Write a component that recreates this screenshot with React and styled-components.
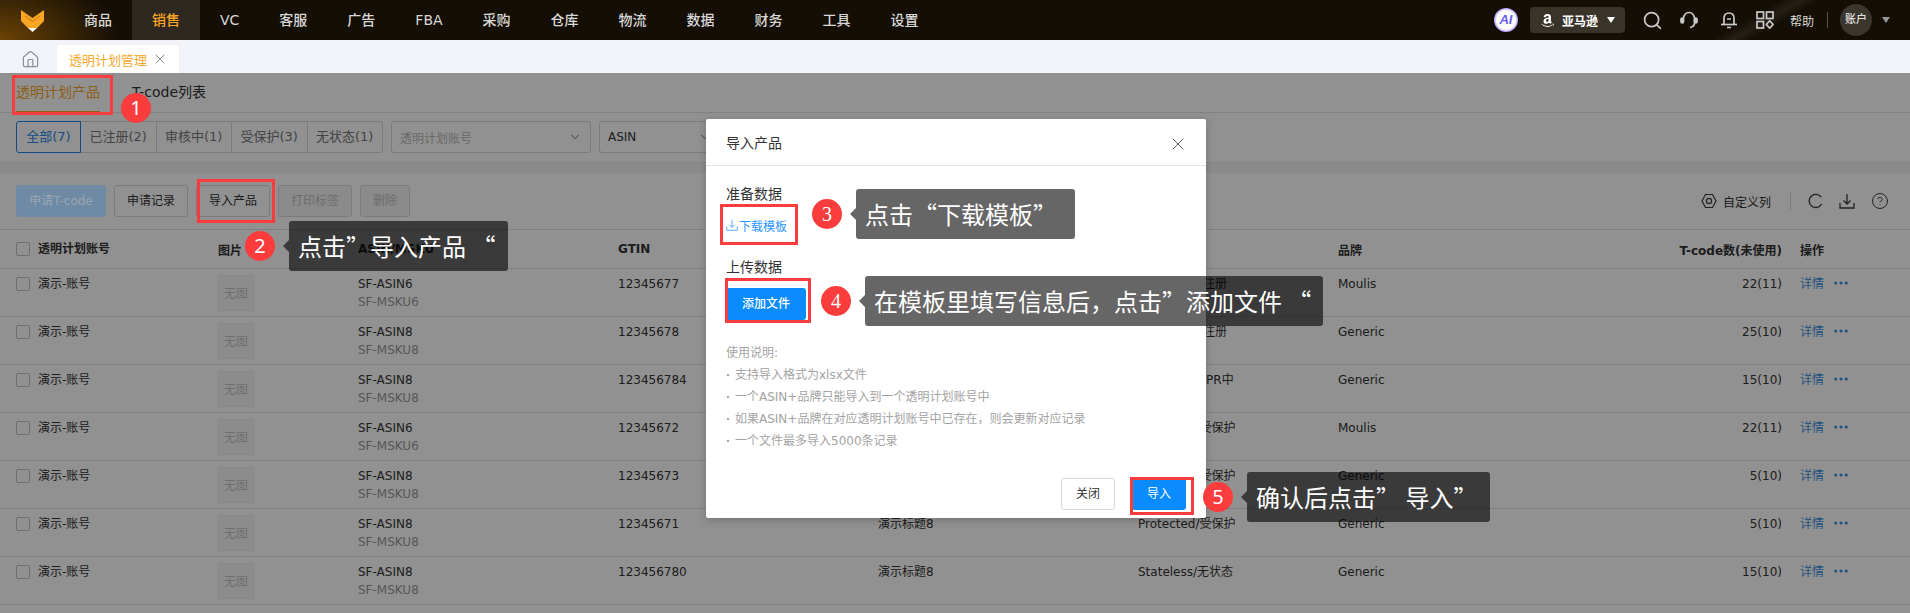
import React from "react";
import styled, { createGlobalStyle } from "styled-components";
import { FaAmazon } from "react-icons/fa";
import { ChevronDown, CircleHelp, Ellipsis, Home, Search, X } from "lucide-react";

const navItems = ["商品", "销售", "VC", "客服", "广告", "FBA", "采购", "仓库", "物流", "数据", "财务", "工具", "设置"];
const filters = ["全部(7)", "已注册(2)", "审核中(1)", "受保护(3)", "无状态(1)"];
const tips = ["支持导入格式为xlsx文件", "一个ASIN+品牌只能导入到一个透明计划账号中", "如果ASIN+品牌在对应透明计划账号中已存在，则会更新对应记录", "一个文件最多导入5000条记录"];
const rows = [
  ["6", "12345677", "Enrolled/已注册", "Moulis", "22(11)"],
  ["8", "12345678", "Enrolled/已注册", "Generic", "25(10)"],
  ["8", "123456784", "Processing/PR中", "Generic", "15(10)"],
  ["6", "12345672", "Protected/受保护", "Moulis", "22(11)"],
  ["8", "12345673", "Protected/受保护", "Generic", "5(10)"],
  ["8", "12345671", "Protected/受保护", "Generic", "5(10)"],
  ["8", "123456780", "Stateless/无状态", "Generic", "15(10)"],
];

const Logo = () => (
  <svg width="23" height="22" viewBox="0 0 23 22">
    <path d="M0 0L11.5 8L23 0V11L16 18H7L0 11Z" fill="#fba525" />
    <path d="M4 6L11.5 11.5L19 6" fill="none" stroke="#c47a12" strokeWidth="1" />
    <path d="M7 18H16L11.5 22Z" fill="#fff" />
  </svg>
);
const Headset = () => (
  <svg width="18" height="18" viewBox="0 0 18 18" fill="none" stroke="#c9c9c9" strokeWidth="1.7">
    <path d="M3.5 7.5C4 3.5 6.5 1.5 9 1.5S14 3.5 14.5 7.5" />
    <path d="M14.5 8V12C14.5 14.5 12.5 16 10 16.5" />
    <rect x="1" y="7" width="2.5" height="5" rx="1.2" fill="#c9c9c9" />
    <rect x="14.5" y="7" width="2.5" height="5" rx="1.2" fill="#c9c9c9" />
  </svg>
);
const Bell = () => (
  <svg width="18" height="18" viewBox="0 0 18 18" fill="none" stroke="#c9c9c9" strokeWidth="1.7">
    <path d="M4 13V7.5C4 4 6 2 9 2S14 4 14 7.5V13" />
    <path d="M1 13.5H17" />
    <path d="M7 16.5H11M7 8H11" />
  </svg>
);
const Apps = () => (
  <svg width="18" height="18" viewBox="0 0 18 18" fill="none" stroke="#c9c9c9" strokeWidth="1.7">
    <rect x="1" y="1" width="6.5" height="6.5" />
    <rect x="10.5" y="1" width="6.5" height="6.5" />
    <rect x="1" y="10.5" width="6.5" height="6.5" />
    <path d="M13.7 9.8L17 13.5L13.7 17.2L10.4 13.5Z" />
  </svg>
);
const HexGear = () => (
  <svg width="16" height="16" viewBox="0 0 16 16" fill="none" stroke="#3d3d3d" strokeWidth="1.2">
    <path d="M4.5 1.5H11.5L15 8L11.5 14.5H4.5L1 8Z" />
    <circle cx="8" cy="8" r="2.6" />
  </svg>
);
const Reload = () => (
  <svg width="15" height="16" viewBox="0 0 15 16" fill="none" stroke="#3d3d3d" strokeWidth="1.4">
    <path d="M13.2 4.2A6.6 6.6 0 1 0 13.6 11" />
  </svg>
);
const Download = ({ size = 16, color = "#3d3d3d", width = 1.3 }) => (
  <svg width={size} height={size} viewBox="0 0 16 16" fill="none" stroke={color} strokeWidth={width}>
    <path d="M8 1V11M4.5 7.5L8 11L11.5 7.5" />
    <path d="M1 10V15H15V10" />
  </svg>
);

export default function App() {
  return (
    <Page>
      <Global />
      <Nav>
        <LogoBox><Logo /></LogoBox>
        {navItems.map((item, i) => (
          <NavItem key={item} $active={i === 1}>{item}</NavItem>
        ))}
        <NavRight>
          <AiBadge>AI</AiBadge>
          <StorePill>
            <FaAmazon size={15} color="#fff" />
            <span>亚马逊</span>
            <Caret $color="#fff" />
          </StorePill>
          <NavIcon $ml={17}><Search size={21} color="#c9c9c9" strokeWidth={1.9} /></NavIcon>
          <NavIcon $ml={17}><Headset /></NavIcon>
          <NavIcon $ml={22}><Bell /></NavIcon>
          <NavIcon $ml={18}><Apps /></NavIcon>
          <HelpText>帮助</HelpText>
          <NavDivider />
          <Avatar>账户</Avatar>
          <Caret $color="#999" />
        </NavRight>
      </Nav>

      <TabBar>
        <HomeBox><Home size={19} color="#8b8f96" strokeWidth={1.5} /></HomeBox>
        <PageTab>
          透明计划管理
          <X size={16} color="#888" strokeWidth={1.5} />
        </PageTab>
      </TabBar>

      <Content>
        <SubTabs>
          <SubTab $active>透明计划产品</SubTab>
          <SubTab>T-code列表</SubTab>
        </SubTabs>

        <FilterRow>
          <Segments>
            {filters.map((f, i) => (
              <Segment key={f} $active={i === 0}>{f}</Segment>
            ))}
          </Segments>
          <Select $width={200} $muted>
            透明计划账号
            <ChevronDown size={14} color="#aaa" />
          </Select>
          <Select $width={122}>
            ASIN
            <ChevronDown size={14} color="#aaa" />
          </Select>
        </FilterRow>

        <Strip />

        <Toolbar>
          <PrimaryDisabled>申请T-code</PrimaryDisabled>
          <ToolButton>申请记录</ToolButton>
          <ToolButton>导入产品</ToolButton>
          <ToolButton $disabled>打印标签</ToolButton>
          <ToolButton $disabled $narrow>删除</ToolButton>
          <ToolRight>
            <ColumnSetting><HexGear />自定义列</ColumnSetting>
            <ToolDivider />
            <ToolIcon><Reload /></ToolIcon>
            <ToolIcon><Download /></ToolIcon>
            <ToolIcon><CircleHelp size={18} color="#3d3d3d" strokeWidth={1.3} /></ToolIcon>
          </ToolRight>
        </Toolbar>

        <HeadRow>
          <AccountCell><Check />透明计划账号</AccountCell>
          <div>图片</div>
          <div>ASIN/MSKU</div>
          <div>GTIN</div>
          <div>标题</div>
          <div>状态</div>
          <div>品牌</div>
          <RightCell>T-code数(未使用)</RightCell>
          <ActionHead>操作</ActionHead>
        </HeadRow>
        {rows.map((r, i) => (
          <Row key={i}>
            <AccountCell><Check />演示-账号</AccountCell>
            <Thumb>无图</Thumb>
            <div>
              SF-ASIN{r[0]}
              <Sku>SF-MSKU{r[0]}</Sku>
            </div>
            <div>{r[1]}</div>
            <div>演示标题8</div>
            <div>{r[2]}</div>
            <div>{r[3]}</div>
            <RightCell>{r[4]}</RightCell>
            <Actions>
              <span>详情</span>
              <Ellipsis size={18} strokeWidth={2.2} />
            </Actions>
          </Row>
        ))}
        <Mask />
      </Content>

      <Modal>
        <ModalHead>
          导入产品
          <X size={20} color="#555" strokeWidth={1.2} />
        </ModalHead>
        <ModalBody>
          <FieldLabel>准备数据</FieldLabel>
          <TemplateLink><Download size={12} color="#4da3ff" width={1.2} />下载模板</TemplateLink>
          <FieldLabel $top={22}>上传数据</FieldLabel>
          <AddFile>添加文件</AddFile>
          <Usage>
            <div>使用说明:</div>
            {tips.map((t) => (
              <Tip key={t}>{t}</Tip>
            ))}
          </Usage>
        </ModalBody>
        <ModalFoot>
          <CloseButton>关闭</CloseButton>
          <ImportButton>导入</ImportButton>
        </ModalFoot>
      </Modal>

      <RedBox $x={12} $y={75} $w={101} $h={40} />
      <RedBox $x={197} $y={179} $w={78} $h={44} />
      <RedBox $x={720} $y={204} $w={78} $h={41} />
      <RedBox $x={725} $y={278} $w={86} $h={45} />
      <RedBox $x={1130} $y={477} $w={64} $h={38} />

      <Badge $x={121} $y={93}>1</Badge>
      <Badge $x={245} $y={231}>2</Badge>
      <Badge $x={812} $y={199} $serif>3</Badge>
      <Badge $x={821} $y={286} $serif>4</Badge>
      <Badge $x={1203} $y={482}>5</Badge>

      <Callout $x={289} $y={221} $w={219}>点击”导入产品 “</Callout>
      <Callout $x={856} $y={189} $w={219}>点击“下载模板”</Callout>
      <Callout $x={865} $y={276} $w={458}>在模板里填写信息后，点击”添加文件 “</Callout>
      <Callout $x={1247} $y={472} $w={243}>确认后点击” 导入”</Callout>
    </Page>
  );
}

const Global = createGlobalStyle`
  html, body {
    margin: 0;
    padding: 0;
    background: #fff;
  }
  body {
    font-family: "DejaVu Sans", "Noto Sans CJK SC", sans-serif;
    font-size: 12px;
    color: #333;
  }
`;

const Page = styled.div`
  position: relative;
  width: 1910px;
  height: 613px;
  overflow: hidden;
`;

const Nav = styled.div`
  display: flex;
  align-items: center;
  height: 40px;
  color: #d8d8d8;
  background:
    radial-gradient(ellipse 120px 70px at 0 100%, #6b4305 0%, rgba(107, 67, 5, 0) 100%),
    linear-gradient(150deg, rgba(0, 0, 0, 0) 90%, rgba(70, 62, 50, 0.35) 91%, rgba(0, 0, 0, 0) 92%),
    #140e05;
`;

const LogoBox = styled.div`
  display: flex;
  align-items: center;
  width: 64px;
  padding: 2px 0 0 21px;
  box-sizing: border-box;
`;

const NavItem = styled.div`
  padding: 0 20px;
  height: 40px;
  line-height: 40px;
  font-size: 14px;
  font-weight: 500;
  color: ${(p) => (p.$active ? "#fba525" : "#d8d8d8")};
  background: ${(p) => (p.$active ? "#2e2820" : "transparent")};
`;

const NavRight = styled.div`
  display: flex;
  align-items: center;
  margin-left: auto;
  padding-right: 20px;
`;

const AiBadge = styled.div`
  width: 24px;
  height: 24px;
  border-radius: 50%;
  margin-right: 12px;
  text-align: center;
  line-height: 24px;
  font-family: "Liberation Sans", sans-serif;
  font-size: 13px;
  font-weight: 700;
  font-style: italic;
  color: #6a5cf0;
  background: radial-gradient(circle at 50% 50%, #fff 55%, #a98bff 72%, #3fb4f5 100%);
`;

const StorePill = styled.div`
  display: flex;
  align-items: center;
  width: 95px;
  height: 26px;
  padding-left: 10px;
  box-sizing: border-box;
  border-radius: 4px;
  background: #3a3329;
  color: #fff;
  font-weight: 700;
  span {
    margin: 0 9px 0 7px;
  }
`;

const Caret = styled.i`
  width: 0;
  height: 0;
  border-left: 4px solid transparent;
  border-right: 4px solid transparent;
  border-top: 6px solid ${(p) => p.$color};
`;

const NavIcon = styled.div`
  display: flex;
  margin-left: ${(p) => p.$ml}px;
`;

const HelpText = styled.div`
  margin-left: 16px;
  color: #d8d8d8;
`;

const NavDivider = styled.div`
  width: 1px;
  height: 16px;
  margin: 0 12px 0 13px;
  background: #555;
`;

const Avatar = styled.div`
  width: 32px;
  height: 32px;
  margin-right: 10px;
  border-radius: 50%;
  line-height: 32px;
  text-align: center;
  font-size: 11px;
  color: #fff;
  background: #3a352d;
`;

const TabBar = styled.div`
  display: flex;
  align-items: flex-end;
  height: 33px;
  background: #f1f3f8;
`;

const HomeBox = styled.div`
  display: flex;
  justify-content: center;
  align-items: center;
  width: 57px;
  height: 28px;
  padding-left: 3px;
  box-sizing: border-box;
`;

const PageTab = styled.div`
  display: flex;
  align-items: center;
  justify-content: space-between;
  width: 122px;
  height: 28px;
  padding: 0 11px 0 12px;
  box-sizing: border-box;
  border-radius: 3px 3px 0 0;
  font-size: 13px;
  white-space: nowrap;
  background: #fff;
  color: #f7a72c;
`;

const Content = styled.div`
  position: relative;
  height: 540px;
  overflow: hidden;
  background: #fff;
`;

const Mask = styled.div`
  position: absolute;
  inset: 0;
  z-index: 1;
  background: rgba(0, 0, 0, 0.43);
`;

const SubTabs = styled.div`
  display: flex;
  gap: 32px;
  height: 39px;
  padding-left: 16px;
  border-bottom: 1px solid #e3e5ea;
`;

const SubTab = styled.div`
  height: 39px;
  line-height: 38px;
  box-sizing: border-box;
  font-size: 14px;
  color: ${(p) => (p.$active ? "#f7a72c" : "#333")};
  border-bottom: 1px solid ${(p) => (p.$active ? "#f7a72c" : "transparent")};
`;

const FilterRow = styled.div`
  display: flex;
  gap: 8px;
  padding: 8px 16px;
`;

const Segments = styled.div`
  display: flex;
`;

const Segment = styled.div`
  width: ${(p) => (p.$active ? 65 : 76.5)}px;
  height: 32px;
  line-height: 30px;
  box-sizing: border-box;
  text-align: center;
  font-size: 13px;
  margin-left: -1px;
  position: relative;
  color: ${(p) => (p.$active ? "#2a87e8" : "#777")};
  border: 1px solid ${(p) => (p.$active ? "#1a86f0" : "#d9d9d9")};
  z-index: ${(p) => (p.$active ? 1 : 0)};
  &:first-child {
    margin-left: 0;
    border-radius: 3px 0 0 3px;
  }
  &:last-child {
    border-radius: 0 3px 3px 0;
  }
`;

const Select = styled.div`
  display: flex;
  align-items: center;
  justify-content: space-between;
  width: ${(p) => p.$width}px;
  height: 32px;
  padding: 0 8px;
  box-sizing: border-box;
  border: 1px solid #d9d9d9;
  border-radius: 3px;
  color: ${(p) => (p.$muted ? "#bbb" : "#333")};
`;

const Strip = styled.div`
  height: 12px;
  background: #f1f2f4;
`;

const Toolbar = styled.div`
  display: flex;
  align-items: center;
  gap: 8px;
  height: 57px;
  padding: 0 16px;
  box-sizing: border-box;
  border-bottom: 1px solid #dfe1e6;
`;

const PrimaryDisabled = styled.div`
  position: relative;
  z-index: 2;
  width: 90px;
  height: 32px;
  line-height: 32px;
  text-align: center;
  border-radius: 3px;
  background: #6f8aa5;
  color: #98a6b4;
`;

const ToolButton = styled.div`
  width: ${(p) => (p.$narrow ? 50 : 74)}px;
  height: 32px;
  line-height: 30px;
  box-sizing: border-box;
  text-align: center;
  border-radius: 3px;
  border: 1px solid #d9d9d9;
  color: ${(p) => (p.$disabled ? "#c0c0c0" : "#333")};
  background: ${(p) => (p.$disabled ? "#f5f5f5" : "#fff")};
`;

const ToolRight = styled.div`
  display: flex;
  align-items: center;
  margin-left: auto;
  padding-right: 5px;
`;

const ColumnSetting = styled.div`
  display: flex;
  align-items: center;
  gap: 6px;
`;

const ToolDivider = styled.div`
  width: 1px;
  height: 18px;
  margin: 0 17px 0 19px;
  background: #d9d9d9;
`;

const ToolIcon = styled.div`
  display: flex;
  margin-right: 16px;
  &:last-child {
    margin-right: 0;
  }
`;

const columns = "202px 140px 260px 260px 260px 200px 200px 244px 128px";

const HeadRow = styled.div`
  display: grid;
  grid-template-columns: ${columns};
  height: 39px;
  align-items: center;
  padding-left: 16px;
  box-sizing: border-box;
  border-bottom: 1px solid #dfe1e6;
  font-weight: 700;
`;

const ActionHead = styled.div`
  padding-left: 18px;
`;

const Row = styled.div`
  display: grid;
  grid-template-columns: ${columns};
  align-items: start;
  height: 48px;
  padding: 6px 0 0 16px;
  box-sizing: border-box;
  line-height: 18px;
  border-bottom: 1px solid #dfe1e6;
`;

const AccountCell = styled.div`
  display: flex;
  align-items: center;
  gap: 8px;
  line-height: 18px;
`;

const Check = styled.i`
  flex: none;
  width: 14px;
  height: 14px;
  box-sizing: border-box;
  border: 1.5px solid #c4c4c4;
  border-radius: 2px;
  background: #fff;
`;

const Thumb = styled.div`
  width: 36px;
  height: 36px;
  line-height: 36px;
  box-sizing: border-box;
  text-align: center;
  color: #c4c4c4;
  background: #f7f7f7;
  border: 1px solid #f0f0f0;
`;

const Sku = styled.div`
  color: #999;
`;

const RightCell = styled.div`
  text-align: right;
  white-space: nowrap;
`;

const Actions = styled.div`
  display: flex;
  align-items: flex-start;
  gap: 8px;
  padding-left: 18px;
  color: #3a8ee6;
  svg {
    margin-top: -1px;
  }
`;

const Modal = styled.div`
  position: absolute;
  left: 706px;
  top: 119px;
  z-index: 3;
  display: flex;
  flex-direction: column;
  width: 500px;
  height: 399px;
  border-radius: 2px;
  background: #fff;
  box-shadow: 0 2px 8px rgba(0, 0, 0, 0.2);
`;

const ModalHead = styled.div`
  display: flex;
  align-items: center;
  justify-content: space-between;
  height: 47px;
  padding: 0 18px 0 20px;
  box-sizing: border-box;
  border-bottom: 1px solid #e2e2e2;
  font-size: 14px;
  color: #333;
  svg {
    margin-top: 3px;
  }
`;

const ModalBody = styled.div`
  padding: 18px 20px 0;
`;

const FieldLabel = styled.div`
  margin-top: ${(p) => p.$top || 0}px;
  line-height: 20px;
  font-size: 14px;
  color: #333;
`;

const TemplateLink = styled.div`
  display: flex;
  align-items: center;
  gap: 1px;
  height: 20px;
  margin-top: 11px;
  color: #2d96ff;
`;

const AddFile = styled.div`
  width: 80px;
  height: 32px;
  margin-top: 11px;
  line-height: 32px;
  text-align: center;
  border-radius: 3px;
  font-weight: 500;
  color: #fff;
  background: #0a8cff;
`;

const Usage = styled.div`
  margin-top: 22px;
  line-height: 22px;
  color: #a3a3a3;
`;

const Tip = styled.div`
  position: relative;
  padding-left: 9px;
  &::before {
    content: "";
    position: absolute;
    left: 1px;
    top: 10px;
    width: 2px;
    height: 2px;
    background: #a3a3a3;
  }
`;

const ModalFoot = styled.div`
  display: flex;
  justify-content: flex-end;
  gap: 17px;
  margin-top: auto;
  padding: 0 20px 8px;
`;

const CloseButton = styled.div`
  width: 54px;
  height: 32px;
  line-height: 30px;
  box-sizing: border-box;
  text-align: center;
  border: 1px solid #d9d9d9;
  border-radius: 3px;
  color: #333;
`;

const ImportButton = styled.div`
  width: 54px;
  height: 32px;
  line-height: 32px;
  text-align: center;
  border-radius: 3px;
  color: #fff;
  background: #0a8cff;
`;

const RedBox = styled.div`
  position: absolute;
  left: ${(p) => p.$x}px;
  top: ${(p) => p.$y}px;
  z-index: 4;
  width: ${(p) => p.$w}px;
  height: ${(p) => p.$h}px;
  box-sizing: border-box;
  border: 3px solid #fb3c3c;
`;

const Badge = styled.div`
  position: absolute;
  left: ${(p) => p.$x}px;
  top: ${(p) => p.$y}px;
  z-index: 4;
  width: 30px;
  height: 30px;
  border-radius: 50%;
  line-height: 30px;
  text-align: center;
  font-family: ${(p) => (p.$serif ? '"Liberation Serif", serif' : '"Noto Sans", sans-serif')};
  font-size: 20px;
  color: #fff;
  background: #fb3c3c;
`;

const Callout = styled.div`
  position: absolute;
  left: ${(p) => p.$x}px;
  top: ${(p) => p.$y}px;
  z-index: 4;
  width: ${(p) => p.$w}px;
  height: 50px;
  padding-left: 9px;
  box-sizing: border-box;
  border-radius: 3px;
  line-height: 49px;
  white-space: pre;
  font-family: "Noto Sans CJK SC", sans-serif;
  font-size: 24px;
  color: #fff;
  background: rgba(0, 0, 0, 0.6);
  &::before {
    content: "";
    position: absolute;
    left: -6px;
    top: 19px;
    border-top: 6px solid transparent;
    border-bottom: 6px solid transparent;
    border-right: 6px solid rgba(0, 0, 0, 0.6);
  }
`;
